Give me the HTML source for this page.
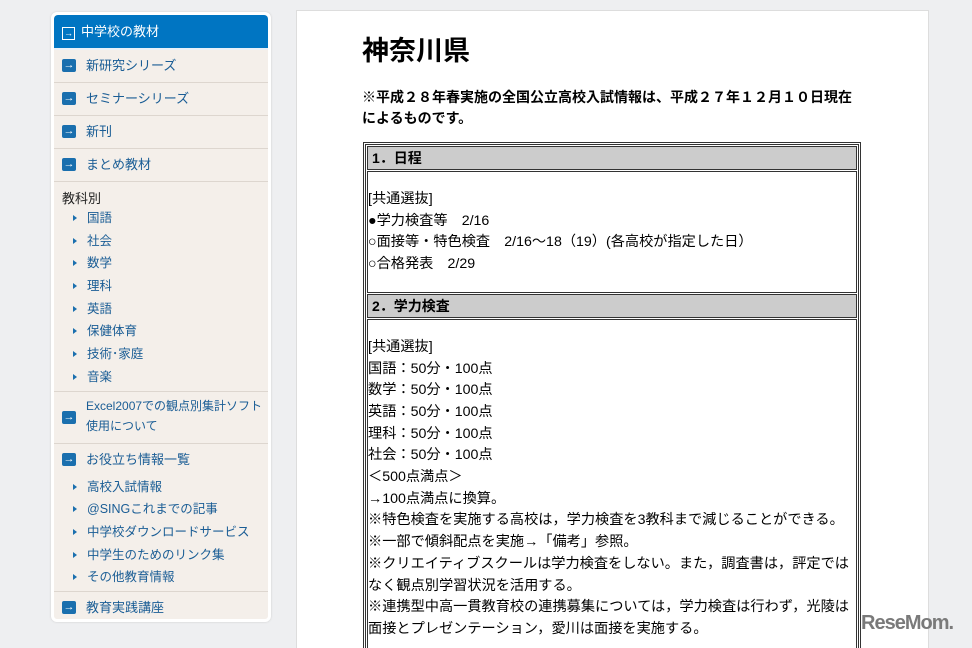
<!DOCTYPE html>
<html><head><meta charset="utf-8"><style>
html,body{margin:0;width:972px;height:648px;overflow:hidden}
body{background:#eeeff1;font-family:"Liberation Sans","Noto Sans CJK JP",sans-serif;position:relative}
#side{position:absolute;left:51px;top:12px;width:214px;height:604px;background:#f4efea;border:3px solid #fff;border-radius:6px;box-shadow:0 0 2px #ccc;overflow:hidden}
.hd{height:33px;background:#0075c2;color:#fff;font-size:13px;line-height:33px;padding-left:8px;border-radius:4px 4px 0 0;border-bottom:2px solid #e8f0f8}
.it{height:32px;line-height:32px;border-bottom:1px solid #ddd6cf;color:#1a5d95;font-size:13px;padding-left:32px;position:relative}
.ic{position:absolute;left:8px;top:9px;width:14px;height:13px;background:#1a6fae;border-radius:2px;color:#fff;font-size:11px;line-height:13px;text-align:center}
.cat{font-size:13px;color:#222;padding:6px 0 0 8px;height:19px}
.sub{font-size:12.5px;color:#1a5d95;height:22.7px;line-height:22.7px;padding-left:33px;position:relative}
.sub:before{content:"";position:absolute;left:19px;top:8px;border-left:4px solid #1a6fae;border-top:3px solid transparent;border-bottom:3px solid transparent}
#main{position:absolute;left:296px;top:10px;width:631px;height:638px;background:#fff;border:1px solid #ddd;border-bottom:0;overflow:hidden}
h1{position:absolute;left:65px;top:18px;margin:0;font-size:27px;font-weight:bold}
.note{position:absolute;left:65px;top:76px;width:492px;font-size:14px;font-weight:bold;line-height:21px}
table{position:absolute;left:66px;top:131px;width:498px;border:3px double #333;border-collapse:separate;border-spacing:1px;font-size:14.2px}
th{background:#ccc;border:1px solid #333;text-align:left;height:22px;padding:0 4px;font-weight:bold;font-size:14px}
td{border:1px solid #333;padding:0;line-height:21.7px;vertical-align:top}
td.a{padding-top:17px;padding-bottom:16px}
#logo{position:absolute;left:861px;top:612px;font-size:20px;font-weight:bold;color:#7a7a7a;letter-spacing:-1px}
</style></head><body>
<div id="side">
<div class="hd"><span style="display:inline-block;width:11px;height:11px;border:1px solid #fff;font-size:9px;line-height:11px;text-align:center;margin-right:6px">→</span>中学校の教材</div>
<div class="it"><span class="ic">→</span>新研究シリーズ</div>
<div class="it"><span class="ic">→</span>セミナーシリーズ</div>
<div class="it"><span class="ic">→</span>新刊</div>
<div class="it"><span class="ic">→</span>まとめ教材</div>
<div class="cat">教科別</div>
<div class="sub">国語</div><div class="sub">社会</div><div class="sub">数学</div><div class="sub">理科</div><div class="sub">英語</div><div class="sub">保健体育</div><div class="sub">技術･家庭</div><div class="sub">音楽</div>
<div class="it" style="height:47px;line-height:20px;padding-top:4px;margin-top:2px;border-top:1px solid #ddd6cf;font-size:12px"><span class="ic" style="top:19px">→</span>Excel2007での観点別集計ソフト<br>使用について</div>
<div class="it" style="border-bottom:0"><span class="ic">→</span>お役立ち情報一覧</div>
<div class="sub">高校入試情報</div><div class="sub">@SINGこれまでの記事</div><div class="sub">中学校ダウンロードサービス</div><div class="sub">中学生のためのリンク集</div><div class="sub">その他教育情報</div>
<div class="it" style="border-top:1px solid #ddd6cf;margin-top:2px;border-bottom:0"><span class="ic">→</span>教育実践講座</div>
</div>
<div id="main">
<h1>神奈川県</h1>
<div class="note">※平成２８年春実施の全国公立高校入試情報は、平成２７年１２月１０日現在によるものです。</div>
<table>
<tr><th>1．日程</th></tr>
<tr><td class="a">[共通選抜]<br>●学力検査等　2/16<br>○面接等・特色検査　2/16～18（19）(各高校が指定した日）<br>○合格発表　2/29</td></tr>
<tr><th>2．学力検査</th></tr>
<tr><td class="a">[共通選抜]<br>国語：50分・100点<br>数学：50分・100点<br>英語：50分・100点<br>理科：50分・100点<br>社会：50分・100点<br>＜500点満点＞<br>→100点満点に換算。<br>※特色検査を実施する高校は，学力検査を3教科まで減じることができる。<br>※一部で傾斜配点を実施→「備考」参照。<br>※クリエイティブスクールは学力検査をしない。また，調査書は，評定ではなく観点別学習状況を活用する。<br>※連携型中高一貫教育校の連携募集については，学力検査は行わず，光陵は面接とプレゼンテーション，愛川は面接を実施する。</td></tr>
</table>
</div>
<div id="logo">ReseMom.</div>
</body></html>
